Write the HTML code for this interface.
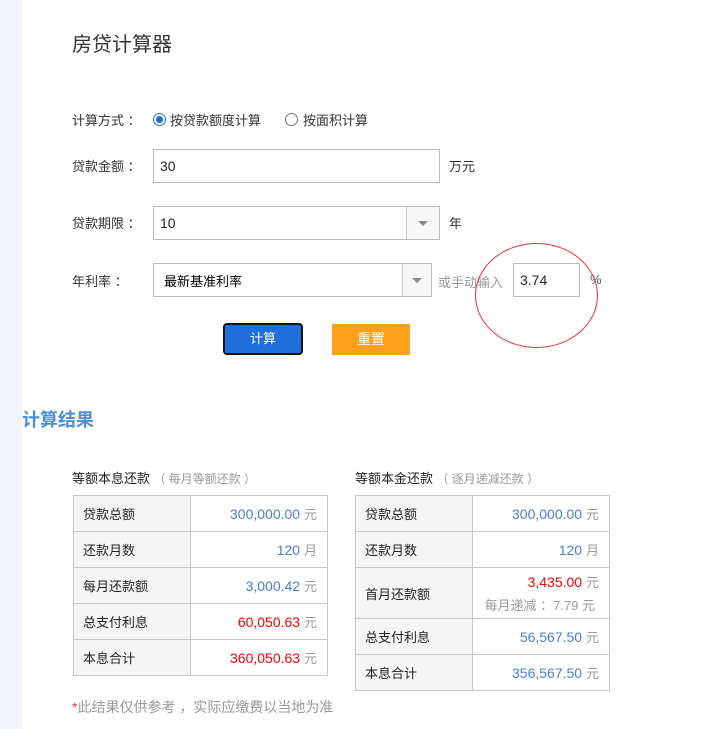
<!DOCTYPE html>
<html><head><meta charset="utf-8"><style>
*{margin:0;padding:0;box-sizing:border-box}
body{width:704px;height:729px;background:#fff;position:relative;overflow:hidden;font-family:"Liberation Sans","Noto Sans CJK SC",sans-serif;font-size:13px;color:#333}
.a{position:absolute;white-space:nowrap}
.strip{position:absolute;left:0;top:0;width:22px;height:729px;background:#f0f3f7}
.box{position:absolute;border:1px solid #bbb;background:#fff;font-size:14px;color:#222;padding-left:6px;display:flex;align-items:center}
.arr{position:absolute;top:0;right:0;bottom:0;border-left:1px solid #ccc;background:#f7f7f7}
.arr:after{content:"";position:absolute;left:50%;top:50%;margin:-2px 0 0 -5px;border-left:5px solid transparent;border-right:5px solid transparent;border-top:5px solid #888}
.radio{position:absolute;width:13px;height:13px;border:1px solid #777;border-radius:50%;background:#fff}
table{position:absolute;border-collapse:collapse;font-size:13px}
td{border:1px solid #c8c8c8;height:36px}
td.l{background:#f5f5f5;padding-left:9px;color:#222;width:117px}
td.r{text-align:right;padding-right:10px;color:#4a7fd0;font-size:14px}
td.r span{color:#999;font-size:13px}
.red{color:#f00!important}
</style></head><body>
<div class="strip"></div>
<div class="a" style="left:72px;top:28px;font-size:20px;color:#333">房贷计算器</div>

<div class="a" style="left:72px;top:110px">计算方式 ：</div>
<div class="radio" style="left:153px;top:113px;border-color:#1e6fdb"><div style="position:absolute;left:2px;top:2px;width:7px;height:7px;border-radius:50%;background:#1e6fdb"></div></div>
<div class="a" style="left:170px;top:110px">按贷款额度计算</div>
<div class="radio" style="left:285px;top:113px"></div>
<div class="a" style="left:303px;top:110px">按面积计算</div>

<div class="a" style="left:72px;top:156px">贷款金额 ：</div>
<div class="box" style="left:153px;top:149px;width:287px;height:34px">30</div>
<div class="a" style="left:449px;top:156px">万元</div>

<div class="a" style="left:72px;top:213px">贷款期限 ：</div>
<div class="box" style="left:153px;top:206px;width:287px;height:34px">10<div class="arr" style="width:33px"></div></div>
<div class="a" style="left:449px;top:213px">年</div>

<div class="a" style="left:72px;top:271px">年利率 ：</div>
<div class="box" style="left:153px;top:263px;width:279px;height:34px;padding-left:10px;font-size:13px;color:#000">最新基准利率<div class="arr" style="width:29px"></div></div>
<div class="a" style="left:438px;top:272px;color:#999">或手动输入</div>
<div class="box" style="left:513px;top:263px;width:67px;height:34px">3.74</div>
<div class="a" style="left:590px;top:272px;color:#555">%</div>
<div style="position:absolute;left:475px;top:243px;width:123px;height:105px;border:1px solid #e33;border-radius:50%"></div>

<div class="a" style="left:223px;top:323px;width:80px;height:32px;background:#1e6fdb;border:2px solid #111;border-radius:4px;color:#fff;text-align:center;line-height:28px">计算</div>
<div class="a" style="left:332px;top:324px;width:78px;height:31px;background:#ff9f1a;color:#fff;text-align:center;line-height:31px;font-size:14px">重置</div>

<div class="a" style="left:22px;top:406px;font-size:18px;font-weight:bold;color:#4a90d9">计算结果</div>

<div class="a" style="left:72px;top:468px;color:#222">等额本息还款<span style="color:#999;font-size:12px"> （ 每月等额还款 ）</span></div>
<table style="left:73px;top:495px;width:255px">
<tr><td class="l">贷款总额</td><td class="r">300,000.00 <span>元</span></td></tr>
<tr><td class="l">还款月数</td><td class="r">120 <span>月</span></td></tr>
<tr><td class="l">每月还款额</td><td class="r">3,000.42 <span>元</span></td></tr>
<tr><td class="l">总支付利息</td><td class="r red">60,050.63 <span>元</span></td></tr>
<tr><td class="l">本息合计</td><td class="r red">360,050.63 <span>元</span></td></tr>
</table>

<div class="a" style="left:355px;top:468px;color:#222">等额本金还款<span style="color:#999;font-size:12px"> （ 逐月递减还款 ）</span></div>
<table style="left:355px;top:495px;width:255px">
<tr><td class="l">贷款总额</td><td class="r">300,000.00 <span>元</span></td></tr>
<tr><td class="l">还款月数</td><td class="r">120 <span>月</span></td></tr>
<tr><td class="l" style="height:51px">首月还款额</td><td class="r" style="line-height:22px;padding-top:2px"><span class="red" style="font-size:14px">3,435.00</span> <span>元</span><br><span style="padding-right:4px">每月递减 ：7.79 元</span></td></tr>
<tr><td class="l">总支付利息</td><td class="r">56,567.50 <span>元</span></td></tr>
<tr><td class="l">本息合计</td><td class="r">356,567.50 <span>元</span></td></tr>
</table>

<div class="a" style="left:72px;top:697px;color:#999;font-size:14px"><span style="color:#f33">*</span>此结果仅供参考 ，实际应缴费以当地为准</div>
</body></html>
